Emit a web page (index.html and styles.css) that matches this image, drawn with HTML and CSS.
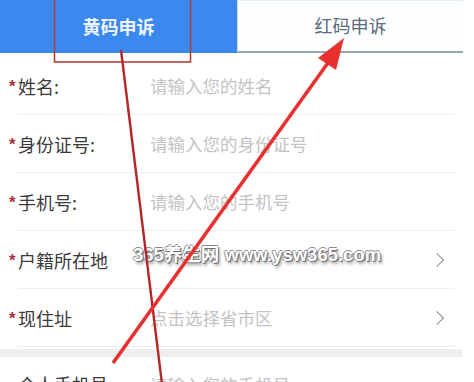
FILE: index.html
```html
<!DOCTYPE html>
<html lang="zh-CN">
<head>
<meta charset="utf-8">
<link rel="stylesheet" href="styles.css">
</head>
<body>
<div class="page">
  <div class="tabs">
    <div class="tab tab-active">黄码申诉</div>
    <div class="tab tab-idle">红码申诉</div>
  </div>
  <div class="form">
    <div class="row"><span class="star">*</span><span class="label">姓名:</span><span class="ph">请输入您的姓名</span></div>
    <div class="row"><span class="star">*</span><span class="label">身份证号:</span><span class="ph">请输入您的身份证号</span></div>
    <div class="row"><span class="star">*</span><span class="label">手机号:</span><span class="ph">请输入您的手机号</span></div>
    <div class="row"><span class="star">*</span><span class="label">户籍所在地</span><span class="ph"></span><span class="chev"></span></div>
    <div class="row"><span class="star">*</span><span class="label">现住址</span><span class="ph">点击选择省市区</span><span class="chev"></span></div>
  </div>
  <div class="band"></div>
  <div class="form form-tail">
    <div class="row row-last"><span class="star">*</span><span class="label">个人手机号</span><span class="ph">请输入您的手机号</span></div>
  </div>
  <div class="watermark">365养生网 www.ysw365.com</div>
  <svg class="annot" width="474" height="382" viewBox="0 0 474 382">
    <rect x="54.5" y="-2" width="136" height="64" fill="none" stroke="#b2403f" stroke-width="1.6"/>
    <line x1="121" y1="50" x2="162" y2="384" stroke="#b3262a" stroke-width="2.4"/>
    <line x1="113" y1="363" x2="330" y2="60" stroke="#e8302f" stroke-width="3.6"/>
    <polygon points="344,38 318,58 336,70" fill="#e8302f"/>
  </svg>
</div>
</body>
</html>
```
FILE: styles.css
```css
* { box-sizing: border-box; }
html, body { margin: 0; padding: 0; background: #fff; }
body { font-family: "Noto Sans CJK SC", "Noto Sans", sans-serif; }
.page { position: relative; width: 474px; height: 382px; overflow: hidden; background: #fff; }
.tabs { display: flex; width: 463px; height: 53px; }
.tab { display: flex; align-items: center; justify-content: center; font-size: 18px; padding-bottom: 2px; }
.tab-active { width: 237px; background: #3b88ef; color: #eef4ff; font-weight: 700; }
.tab-idle { flex: 1; background: #fdfeff; color: #5d6b7e; border-top: 1px solid #e4ecf7; border-left: 1px solid #cfe0f6; border-bottom: 2px solid #98a6b6; }
.form { display: flex; flex-direction: column; padding-top: 4px; }
.row { display: flex; align-items: center; height: 58px; margin: 0 19px 0 18px; border-bottom: 1px solid #eeeeee; padding-right: 10px; }
.star { width: 9px; margin-left: -9px; color: #a8323e; font-family: "Liberation Sans", sans-serif; font-size: 17px; font-weight: 700; line-height: 1; margin-top: 2px; }
.label { width: 132px; font-size: 18px; color: #3b3b3b; }
.ph { flex: 1; font-size: 17.5px; color: #c3c3c3; }
.chev { width: 10px; height: 10px; border-top: 1.6px solid #8e8e8e; border-right: 1.6px solid #8e8e8e; transform: rotate(45deg); margin-right: 3px; }
.band { height: 8px; margin-top: 2px; background: #eeeeee; width: 462px; }
.form-tail { padding-top: 0; }
.row-last { border-bottom: none; height: 40px; align-items: flex-end; }
.watermark { position: absolute; left: 133px; top: 240px; font-family: "Liberation Sans", "Noto Sans CJK SC", sans-serif; font-weight: 700; font-size: 18.5px; color: #ffffff; text-shadow: 1px 1px 0 #6f6f6f, -1px 0 0 #8a8a8a, 0 -1px 0 #8a8a8a, 2px 3px 3px rgba(0,0,0,0.35); }
.annot { position: absolute; left: 0; top: 0; }
```
